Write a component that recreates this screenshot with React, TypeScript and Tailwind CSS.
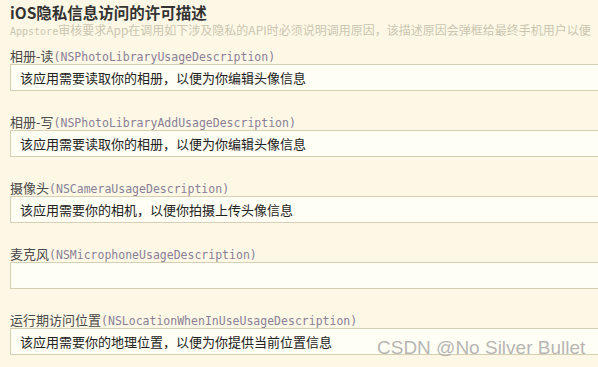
const items = [
  { zh: '相册-读', key: 'NSPhotoLibraryUsageDescription', value: '该应用需要读取你的相册，以便为你编辑头像信息' },
  { zh: '相册-写', key: 'NSPhotoLibraryAddUsageDescription', value: '该应用需要读取你的相册，以便为你编辑头像信息' },
  { zh: '摄像头', key: 'NSCameraUsageDescription', value: '该应用需要你的相机，以便你拍摄上传头像信息' },
  { zh: '麦克风', key: 'NSMicrophoneUsageDescription', value: '' },
  { zh: '运行期访问位置', key: 'NSLocationWhenInUseUsageDescription', value: '该应用需要你的地理位置，以便为你提供当前位置信息' },
];

export default function App() {
  return (
    <div className="relative w-[598px] h-[367px] overflow-hidden bg-[#fdf8e6] font-['Noto_Sans_CJK_SC',sans-serif]">
      <div className="pl-[10px] pt-[2px]">
        <h1 className="text-[15.5px] leading-[20px] font-bold text-[#333333] whitespace-nowrap">iOS隐私信息访问的许可描述</h1>
        <p className="text-[12px] leading-[16px] text-[#cbc6b0] whitespace-nowrap">
          <span className="font-['DejaVu_Sans_Mono',monospace] text-[10px]">Appstore</span>审核要求App在调用如下涉及隐私的API时必须说明调用原因，该描述原因会弹框给最终手机用户以便
        </p>

        <div className="mt-[7px] flex flex-col gap-[22px]">
          {items.map((it) => (
            <div key={it.key}>
              <div className="h-[17px] leading-[17px] text-[13px] text-[#4a4a4a] whitespace-nowrap">
                {it.zh}
                <span className="font-['DejaVu_Sans_Mono',monospace] text-[11.5px] text-[#8a7f96]">({it.key})</span>
              </div>
              <div className="w-[640px] h-[27px] border border-[#d6cfb3] bg-[#fffef4] pl-[9px] flex items-center text-[13px] text-[#222222] whitespace-nowrap">
                {it.value}
              </div>
            </div>
          ))}
        </div>
      </div>

      <div className="absolute left-[377px] top-[336px] text-[19px] leading-[24px] text-[#a3a3a3]/80 font-['Liberation_Sans',sans-serif] whitespace-nowrap">
        CSDN @No Silver Bullet
      </div>
    </div>
  );
}
